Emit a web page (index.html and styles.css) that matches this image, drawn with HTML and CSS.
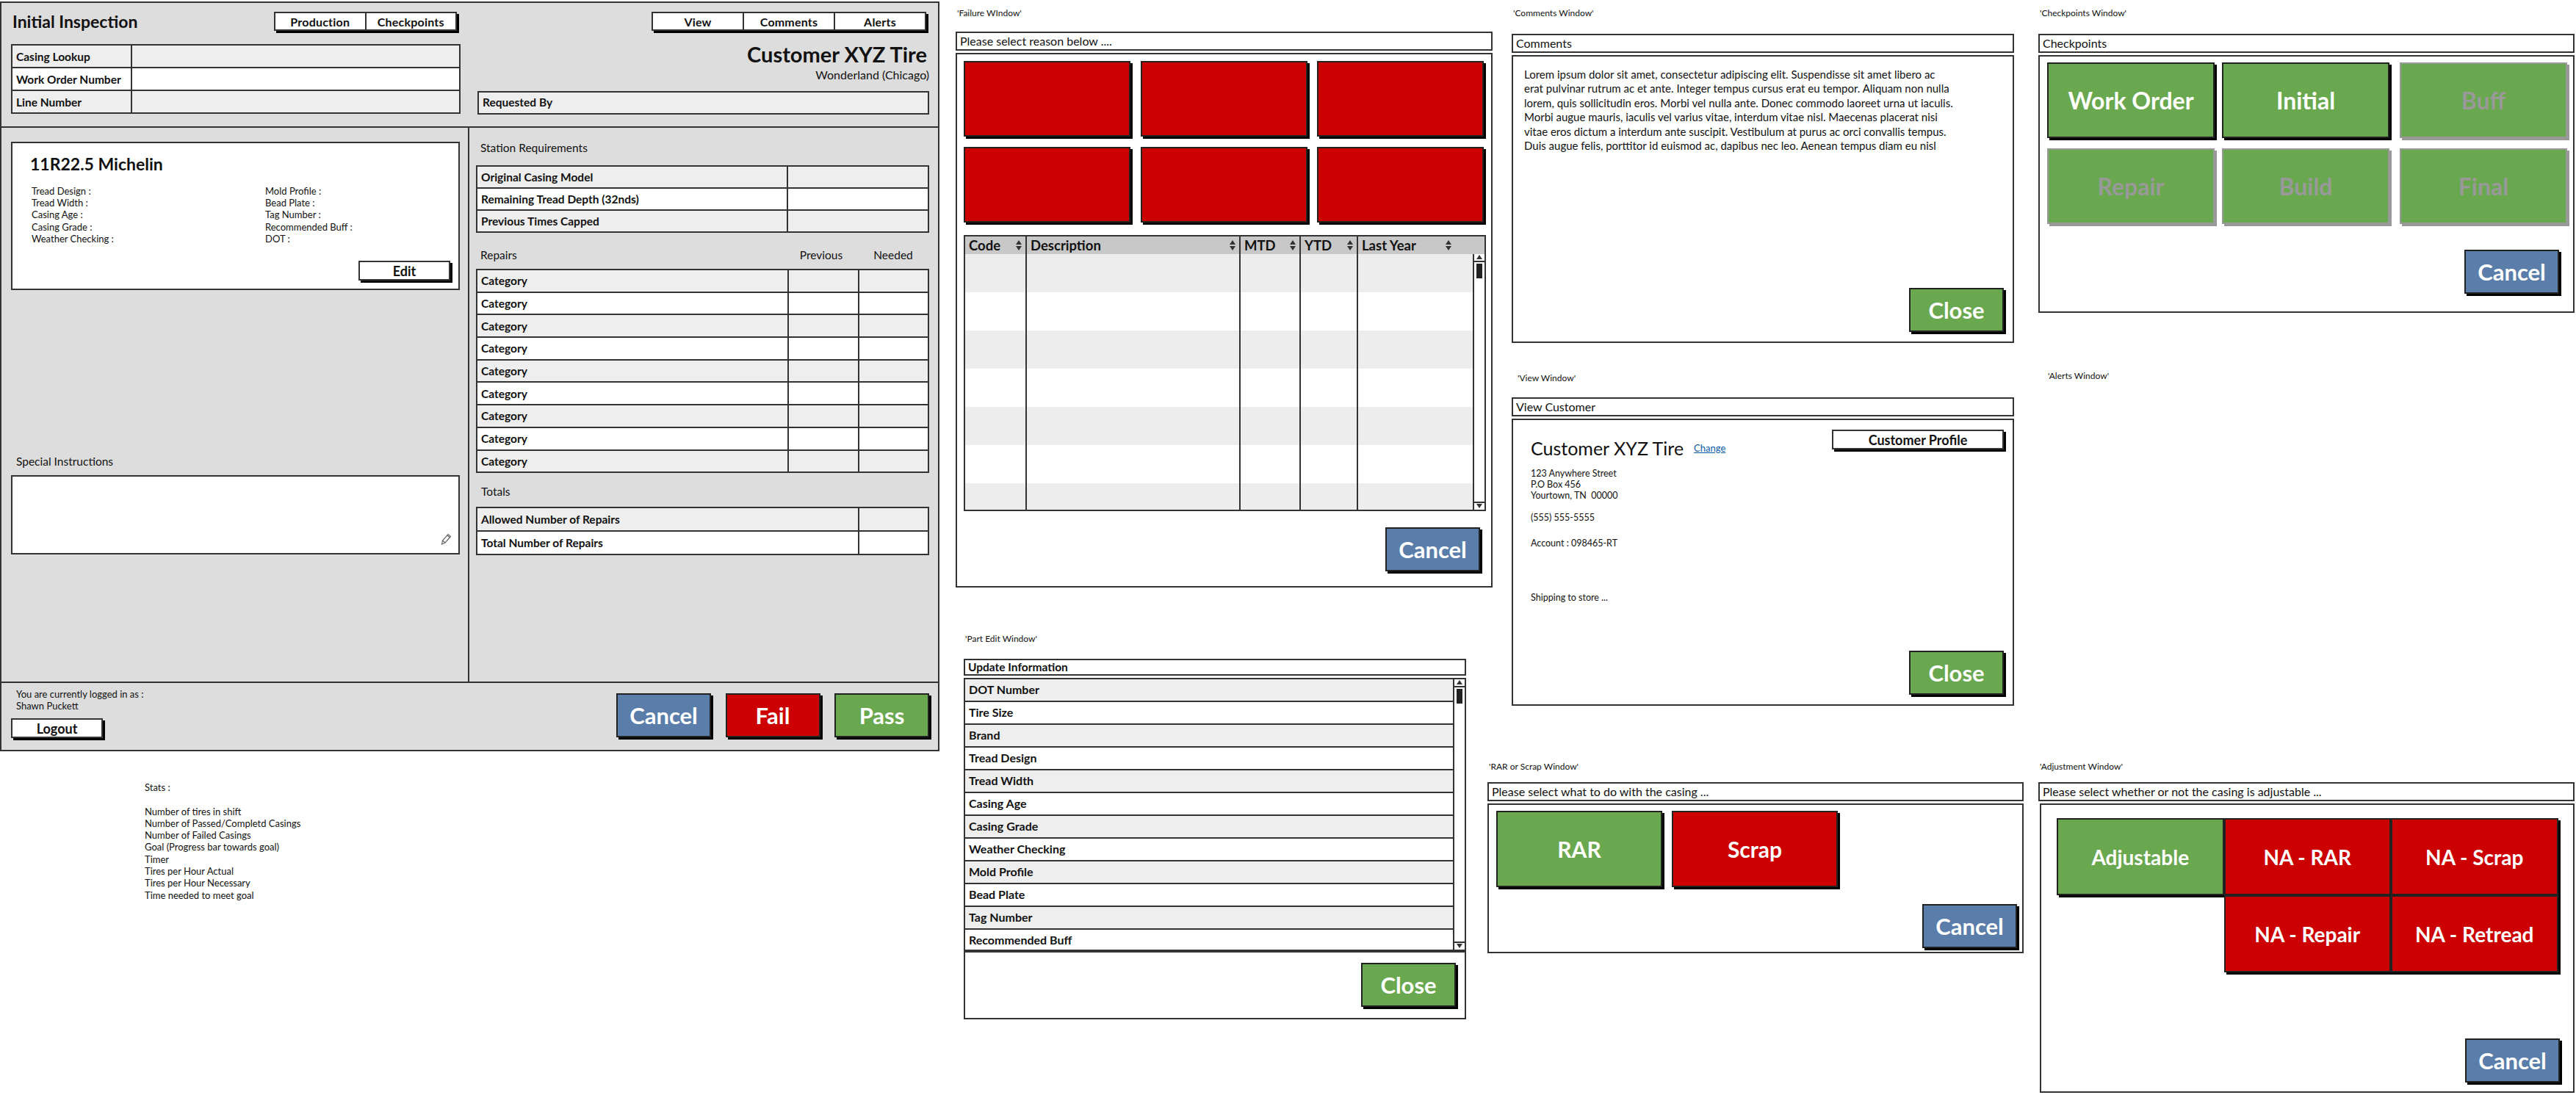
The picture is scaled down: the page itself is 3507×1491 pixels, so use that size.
FILE: index.html
```html
<!DOCTYPE html>
<html lang="en">
<head>
  <meta charset="UTF-8">
  <meta name="viewport" content="width=device-width, initial-scale=1.0">
  <title>Initial Inspection Wireframes</title>
  <link rel="stylesheet" href="styles.css">
</head>
<body>
  <div class="canvas">

    <!-- Main screen -->
    <section class="screen">
      <header class="screen-head">
        <div class="head-col">
          <div class="head-row">
            <h1 class="screen-title">Initial Inspection</h1>
            <div class="btn-group group-left">
              <button class="group-btn">Production</button>
              <button class="group-btn">Checkpoints</button>
            </div>
          </div>
          <table class="sheet sheet-lookup">
            <tr><td class="cell-label">Casing Lookup</td><td></td></tr>
            <tr><td class="cell-label">Work Order Number</td><td></td></tr>
            <tr><td class="cell-label">Line Number</td><td></td></tr>
          </table>
        </div>
        <div class="head-col">
          <div class="btn-group group-right">
            <button class="group-btn">View</button>
            <button class="group-btn">Comments</button>
            <button class="group-btn">Alerts</button>
          </div>
          <h2 class="customer-name">Customer XYZ Tire</h2>
          <p class="customer-place">Wonderland (Chicago)</p>
          <div class="requested">Requested By</div>
        </div>
      </header>

      <div class="screen-main">
        <div class="main-left">
          <div class="tire-card">
            <h2 class="tire-name">11R22.5 Michelin</h2>
            <div class="tire-specs">
              <ul class="spec-list">
                <li>Tread Design :</li>
                <li>Tread Width :</li>
                <li>Casing Age :</li>
                <li>Casing Grade :</li>
                <li>Weather Checking :</li>
              </ul>
              <ul class="spec-list">
                <li>Mold Profile :</li>
                <li>Bead Plate :</li>
                <li>Tag Number :</li>
                <li>Recommended Buff :</li>
                <li>DOT :</li>
              </ul>
            </div>
            <button class="plain-btn edit-btn">Edit</button>
          </div>
          <div class="instructions">
            <h3 class="section-label">Special Instructions</h3>
            <div class="text-box">
              <svg class="pencil" width="15" height="16" viewBox="0 0 15 16">
                <path d="M1.5 15 L2.5 10 L10 1.5 L13.5 4.5 L6 13 Z M9 3 L12.5 6 M2.5 10 L6 13" fill="#fff" stroke="#666" stroke-width="1.2"/>
              </svg>
            </div>
          </div>
        </div>

        <div class="main-right">
          <h3 class="section-label">Station Requirements</h3>
          <table class="sheet sheet-station">
            <tr><td class="cell-wide">Original Casing Model</td><td></td></tr>
            <tr><td class="cell-wide">Remaining Tread Depth (32nds)</td><td></td></tr>
            <tr><td class="cell-wide">Previous Times Capped</td><td></td></tr>
          </table>
          <div class="repairs-head">
            <h3 class="section-label">Repairs</h3>
            <span class="col-head">Previous</span>
            <span class="col-head">Needed</span>
          </div>
          <table class="sheet sheet-repairs">
            <tr><td class="cell-wide">Category</td><td class="cell-num"></td><td class="cell-num"></td></tr>
            <tr><td class="cell-wide">Category</td><td class="cell-num"></td><td class="cell-num"></td></tr>
            <tr><td class="cell-wide">Category</td><td class="cell-num"></td><td class="cell-num"></td></tr>
            <tr><td class="cell-wide">Category</td><td class="cell-num"></td><td class="cell-num"></td></tr>
            <tr><td class="cell-wide">Category</td><td class="cell-num"></td><td class="cell-num"></td></tr>
            <tr><td class="cell-wide">Category</td><td class="cell-num"></td><td class="cell-num"></td></tr>
            <tr><td class="cell-wide">Category</td><td class="cell-num"></td><td class="cell-num"></td></tr>
            <tr><td class="cell-wide">Category</td><td class="cell-num"></td><td class="cell-num"></td></tr>
            <tr><td class="cell-wide">Category</td><td class="cell-num"></td><td class="cell-num"></td></tr>
          </table>
          <h3 class="section-label totals-label">Totals</h3>
          <table class="sheet sheet-totals">
            <tr><td>Allowed Number of Repairs</td><td class="cell-num"></td></tr>
            <tr><td>Total Number of Repairs</td><td class="cell-num"></td></tr>
          </table>
        </div>
      </div>

      <footer class="screen-foot">
        <div class="login">
          <p class="login-text">You are currently logged in as :<br>Shawn Puckett</p>
          <button class="plain-btn logout-btn">Logout</button>
        </div>
        <div class="foot-actions">
          <button class="btn btn-blue">Cancel</button>
          <button class="btn btn-red">Fail</button>
          <button class="btn btn-green">Pass</button>
        </div>
      </footer>
    </section>

    <p class="stats">
      Stats :<br><br>
      Number of tires in shift<br>
      Number of Passed/Completd Casings<br>
      Number of Failed Casings<br>
      Goal (Progress bar towards goal)<br>
      Timer<br>
      Tires per Hour Actual<br>
      Tires per Hour Necessary<br>
      Time needed to meet goal
    </p>

    <!-- Failure window -->
    <p class="note note-failure">'Failure WIndow'</p>
    <section class="win win-failure">
      <div class="win-title">Please select reason below ....</div>
      <div class="win-body failure-body">
        <div class="tile-grid failure-tiles">
          <button class="tile btn-red"></button>
          <button class="tile btn-red"></button>
          <button class="tile btn-red"></button>
          <button class="tile btn-red"></button>
          <button class="tile btn-red"></button>
          <button class="tile btn-red"></button>
        </div>
        <div class="data-grid">
          <table class="grid-table">
            <thead>
              <tr>
                <th class="col-code"><span class="th-inner">Code <svg class="sort" width="8" height="14" viewBox="0 0 8 14"><path d="M4 0 L8 6 L0 6 Z M0 8 L8 8 L4 14 Z"/></svg></span></th>
                <th class="col-desc"><span class="th-inner">Description <svg class="sort" width="8" height="14" viewBox="0 0 8 14"><path d="M4 0 L8 6 L0 6 Z M0 8 L8 8 L4 14 Z"/></svg></span></th>
                <th class="col-mtd"><span class="th-inner">MTD <svg class="sort" width="8" height="14" viewBox="0 0 8 14"><path d="M4 0 L8 6 L0 6 Z M0 8 L8 8 L4 14 Z"/></svg></span></th>
                <th class="col-ytd"><span class="th-inner">YTD <svg class="sort" width="8" height="14" viewBox="0 0 8 14"><path d="M4 0 L8 6 L0 6 Z M0 8 L8 8 L4 14 Z"/></svg></span></th>
                <th class="col-year"><span class="th-inner">Last Year <svg class="sort" width="8" height="14" viewBox="0 0 8 14"><path d="M4 0 L8 6 L0 6 Z M0 8 L8 8 L4 14 Z"/></svg></span></th>
              </tr>
            </thead>
            <tbody>
              <tr><td></td><td></td><td></td><td></td><td></td></tr>
              <tr><td></td><td></td><td></td><td></td><td></td></tr>
              <tr><td></td><td></td><td></td><td></td><td></td></tr>
              <tr><td></td><td></td><td></td><td></td><td></td></tr>
              <tr><td></td><td></td><td></td><td></td><td></td></tr>
              <tr><td></td><td></td><td></td><td></td><td></td></tr>
              <tr><td></td><td></td><td></td><td></td><td></td></tr>
            </tbody>
          </table>
          <div class="scrollbar scrollbar-grid">
            <span class="scroll-arrow"><svg width="10" height="8" viewBox="0 0 10 8"><path d="M5 1 L9 7 L1 7 Z"/></svg></span>
            <span class="scroll-thumb"></span>
            <span class="scroll-arrow scroll-arrow-end"><svg width="10" height="8" viewBox="0 0 10 8"><path d="M1 1 L9 1 L5 7 Z"/></svg></span>
          </div>
        </div>
        <div class="win-actions failure-actions">
          <button class="btn btn-blue">Cancel</button>
        </div>
      </div>
    </section>

    <!-- Comments window -->
    <p class="note note-comments">'Comments Window'</p>
    <section class="win win-comments">
      <div class="win-title">Comments</div>
      <div class="win-body comments-body">
        <p class="comments-text">Lorem ipsum dolor sit amet, consectetur adipiscing elit. Suspendisse sit amet libero ac<br>erat pulvinar rutrum ac et ante. Integer tempus cursus erat eu tempor. Aliquam non nulla<br>lorem, quis sollicitudin eros. Morbi vel nulla ante. Donec commodo laoreet urna ut iaculis.<br>Morbi augue mauris, iaculis vel varius vitae, interdum vitae nisl. Maecenas placerat nisi<br>vitae eros dictum a interdum ante suscipit. Vestibulum at purus ac orci convallis tempus.<br>Duis augue felis, porttitor id euismod ac, dapibus nec leo. Aenean tempus diam eu nisl</p>
        <div class="win-actions">
          <button class="btn btn-green">Close</button>
        </div>
      </div>
    </section>

    <!-- Checkpoints window -->
    <p class="note note-checkpoints">'Checkpoints Window'</p>
    <section class="win win-checkpoints">
      <div class="win-title">Checkpoints</div>
      <div class="win-body checkpoints-body">
        <div class="tile-grid checkpoint-tiles">
          <button class="tile btn-green">Work Order</button>
          <button class="tile btn-green">Initial</button>
          <button class="tile btn-green is-off">Buff</button>
          <button class="tile btn-green is-off">Repair</button>
          <button class="tile btn-green is-off">Build</button>
          <button class="tile btn-green is-off">Final</button>
        </div>
        <div class="win-actions checkpoint-actions">
          <button class="btn btn-blue">Cancel</button>
        </div>
      </div>
    </section>

    <!-- View window -->
    <p class="note note-view">'View Window'</p>
    <section class="win win-view">
      <div class="win-title">View Customer</div>
      <div class="win-body view-body">
        <div class="view-top">
          <div class="view-name">
            <h2 class="view-customer">Customer XYZ Tire</h2>
            <a class="view-link" href="#">Change</a>
          </div>
          <button class="plain-btn profile-btn">Customer Profile</button>
        </div>
        <p class="view-text">123 Anywhere Street<br>P.O Box 456<br>Yourtown, TN&nbsp; 00000</p>
        <p class="view-text view-phone">(555) 555-5555</p>
        <p class="view-text view-account">Account : 098465-RT</p>
        <p class="view-text view-ship">Shipping to store ...</p>
        <div class="win-actions">
          <button class="btn btn-green">Close</button>
        </div>
      </div>
    </section>

    <p class="note note-alerts">'Alerts Window'</p>

    <!-- Part edit window -->
    <p class="note note-part">'Part Edit Window'</p>
    <section class="win win-part">
      <div class="win-title part-title">Update Information</div>
      <div class="part-list">
        <div class="part-row">DOT Number</div>
        <div class="part-row">Tire Size</div>
        <div class="part-row">Brand</div>
        <div class="part-row">Tread Design</div>
        <div class="part-row">Tread Width</div>
        <div class="part-row">Casing Age</div>
        <div class="part-row">Casing Grade</div>
        <div class="part-row">Weather Checking</div>
        <div class="part-row">Mold Profile</div>
        <div class="part-row">Bead Plate</div>
        <div class="part-row">Tag Number</div>
        <div class="part-row">Recommended Buff</div>
        <div class="scrollbar scrollbar-part">
          <span class="scroll-arrow"><svg width="10" height="8" viewBox="0 0 10 8"><path d="M5 1 L9 7 L1 7 Z"/></svg></span>
          <span class="scroll-thumb"></span>
          <span class="scroll-arrow scroll-arrow-end"><svg width="10" height="8" viewBox="0 0 10 8"><path d="M1 1 L9 1 L5 7 Z"/></svg></span>
        </div>
      </div>
      <div class="win-body part-foot">
        <div class="win-actions">
          <button class="btn btn-green">Close</button>
        </div>
      </div>
    </section>

    <!-- RAR or scrap window -->
    <p class="note note-rar">'RAR or Scrap Window'</p>
    <section class="win win-rar">
      <div class="win-title">Please select what to do with the casing ...</div>
      <div class="win-body rar-body">
        <div class="rar-tiles">
          <button class="tile btn-green">RAR</button>
          <button class="tile btn-red">Scrap</button>
        </div>
        <div class="win-actions">
          <button class="btn btn-blue">Cancel</button>
        </div>
      </div>
    </section>

    <!-- Adjustment window -->
    <p class="note note-adjust">'Adjustment Window'</p>
    <section class="win win-adjust">
      <div class="win-title">Please select whether or not the casing is adjustable ...</div>
      <div class="win-body adjust-body">
        <div class="adjust-tiles">
          <button class="tile btn-green">Adjustable</button>
          <button class="tile btn-red">NA - RAR</button>
          <button class="tile btn-red">NA - Scrap</button>
          <button class="tile btn-red adjust-second">NA - Repair</button>
          <button class="tile btn-red">NA - Retread</button>
        </div>
        <div class="win-actions">
          <button class="btn btn-blue">Cancel</button>
        </div>
      </div>
    </section>

  </div>
</body>
</html>
```

FILE: styles.css
```css
/* Global Styles */
* {
  margin: 0;
  padding: 0;
  box-sizing: border-box;
}

body {
  font-family: Lato, "Open Sans", sans-serif;
  color: #111;
  background-color: #fff;
}

button {
  font-family: inherit;
  cursor: pointer;
}

ul {
  list-style: none;
}

/* Free canvas the mockups sit on */
.canvas {
  position: relative;
  width: 3507px;
  height: 1491px;
  overflow: hidden;
}

/* Main Screen */
.screen {
  position: absolute;
  left: 0;
  top: 2px;
  width: 1279px;
  height: 1021px;
  display: flex;
  flex-direction: column;
  border: 2px solid #333;
  background-color: #ddd;
}

.screen-head {
  height: 170px;
  flex: none;
  display: grid;
  grid-template-columns: 612px 615px;
  column-gap: 23px;
  padding: 12px 0 0 13px;
  border-bottom: 2px solid #333;
}

.head-row {
  display: flex;
  justify-content: space-between;
  align-items: center;
  margin-bottom: 18px;
  padding-right: 5px;
}

.screen-title {
  font-size: 23px;
  font-weight: 700;
  line-height: 26px;
  padding-left: 2px;
}

/* Button Groups */
.btn-group {
  display: flex;
  height: 26px;
  border: 2px solid #333;
  background-color: #fff;
  box-shadow: 3px 3px 0 #000;
}

.group-left {
  width: 249px;
}

.group-right {
  width: 374px;
  margin-left: 237px;
}

.group-btn {
  flex: 1;
  border: none;
  border-left: 2px solid #333;
  background: none;
  font-size: 16px;
  font-weight: 700;
  letter-spacing: 0.2px;
  color: #111;
}

.group-btn:first-child {
  border-left: none;
}

/* Customer Header */
.customer-name {
  margin-top: 15px;
  padding-right: 3px;
  font-size: 29px;
  font-weight: 700;
  line-height: 34px;
  text-align: right;
}

.customer-place {
  padding-top: 1px;
  font-size: 16px;
  line-height: 19px;
  text-align: right;
}

.requested {
  height: 32px;
  margin-top: 13px;
  padding-left: 5px;
  border: 2px solid #333;
  font-size: 15.5px;
  font-weight: 700;
  line-height: 26px;
  background-color: #eee;
}

/* Sheets (label tables) */
.sheet {
  width: 100%;
  border: 2px solid #333;
  border-collapse: collapse;
  table-layout: fixed;
  font-size: 15.5px;
  font-weight: 700;
}

.sheet td {
  padding-left: 5px;
  border: 2px solid #333;
}

.sheet tr:nth-child(odd) td {
  background-color: #eee;
}

.sheet tr:nth-child(even) td {
  background-color: #fff;
}

.sheet-lookup tr {
  height: 31px;
}

.sheet-lookup .cell-label {
  width: 163px;
}

.sheet-station tr {
  height: 30px;
}

.cell-wide {
  width: 423px;
}

.cell-num {
  width: 95px;
}

.sheet-repairs tr {
  height: 30.7px;
}

.sheet-totals tr {
  height: 32px;
}

/* Main Body */
.screen-main {
  flex: 1;
  display: flex;
  min-height: 0;
}

.main-left {
  width: 637px;
  flex: none;
  padding: 19px 11px 0 13px;
  display: flex;
  flex-direction: column;
  border-right: 2px solid #333;
}

.main-right {
  flex: 1;
  padding: 17px 12px 0 9px;
}

.section-label {
  font-size: 15.5px;
  font-weight: 400;
  line-height: 20px;
}

/* Tire Card */
.tire-card {
  height: 202px;
  padding: 14px 11px 0 24px;
  display: flex;
  flex-direction: column;
  border: 2px solid #333;
  background-color: #fff;
}

.tire-name {
  font-size: 23px;
  font-weight: 700;
  line-height: 28px;
}

.tire-specs {
  display: grid;
  grid-template-columns: 318px 1fr;
  margin-top: 15px;
  padding-left: 2px;
}

.spec-list li {
  font-size: 13px;
  line-height: 16.2px;
}

.plain-btn {
  border: 2px solid #333;
  background-color: #fff;
  box-shadow: 3px 3px 0 #000;
  font-size: 18px;
  font-weight: 700;
  color: #111;
}

.edit-btn {
  width: 125px;
  height: 27px;
  margin-top: auto;
  margin-bottom: 11px;
  align-self: flex-end;
}

.instructions {
  margin-top: auto;
  margin-bottom: 173px;
}

.instructions .section-label {
  margin-bottom: 9px;
  padding-left: 7px;
}

.text-box {
  position: relative;
  height: 108px;
  border: 2px solid #333;
  background-color: #fff;
}

.pencil {
  position: absolute;
  right: 9px;
  bottom: 11px;
}

/* Repairs / Station */
.sheet-station {
  margin-top: 14px;
}

.main-right > .section-label:first-child {
  padding-left: 6px;
}

.repairs-head {
  display: flex;
  align-items: center;
  margin: 20px 0 9px;
  padding-left: 6px;
}

.repairs-head .section-label {
  flex: 1;
}

.col-head {
  width: 98px;
  font-size: 15.5px;
  text-align: center;
}

.totals-label {
  margin: 15px 0 11px;
  padding-left: 7px;
}

/* Screen Footer */
.screen-foot {
  height: 93px;
  flex: none;
  display: flex;
  justify-content: space-between;
  padding: 7px 12px 0 13px;
  border-top: 2px solid #333;
}

.login-text {
  padding-left: 7px;
  font-size: 13px;
  line-height: 16px;
}

.logout-btn {
  width: 125px;
  height: 27px;
  margin-top: 9px;
}

.foot-actions {
  display: flex;
  gap: 19.5px;
  padding-top: 7px;
}

/* Colour Buttons */
.btn {
  width: 129px;
  height: 60px;
  border: 2px solid #222;
  box-shadow: 3px 3px 0 #000;
  font-size: 31px;
  font-weight: 700;
  color: #fff;
}

.btn-blue {
  background-color: #5a7daa;
}

.btn-red {
  background-color: #cc0000;
}

.btn-green {
  background-color: #69a84f;
}

.tile {
  border: 2px solid #222;
  box-shadow: 3px 3px 0 #000;
  font-size: 30px;
  font-weight: 700;
  color: #fff;
}

.tile.is-off {
  border-color: #999;
  box-shadow: 3px 3px 0 #999;
  color: #999;
}

/* Windows */
.win {
  position: absolute;
  display: flex;
  flex-direction: column;
  gap: 3px;
}

.win-title {
  height: 26px;
  flex: none;
  padding-left: 4px;
  border: 2px solid #333;
  font-size: 16px;
  line-height: 21px;
  background-color: #fff;
}

.win-body {
  flex: 1;
  display: flex;
  flex-direction: column;
  min-height: 0;
  border: 2px solid #333;
  background-color: #fff;
}

.win-actions {
  display: flex;
  justify-content: flex-end;
  margin-top: auto;
}

.note {
  position: absolute;
  font-size: 12px;
  line-height: 16px;
}

.note-failure {
  left: 1303px;
  top: 10px;
}

.note-comments {
  left: 2060px;
  top: 10px;
}

.note-checkpoints {
  left: 2777px;
  top: 10px;
}

.note-view {
  left: 2066px;
  top: 507px;
}

.note-alerts {
  left: 2788px;
  top: 504px;
}

.note-part {
  left: 1314px;
  top: 862px;
}

.note-rar {
  left: 2027px;
  top: 1036px;
}

.note-adjust {
  left: 2777px;
  top: 1036px;
}

.stats {
  position: absolute;
  left: 197px;
  top: 1064px;
  font-size: 13px;
  line-height: 16.3px;
}

/* Failure Window */
.win-failure {
  left: 1301px;
  top: 43px;
  width: 731px;
  height: 757px;
}

.failure-body {
  padding: 9px 7px 20px 9px;
}

.failure-actions {
  margin-right: 8px;
}

.tile-grid {
  display: grid;
  grid-template-columns: repeat(3, 227px);
  grid-auto-rows: 103px;
  column-gap: 13.5px;
  row-gap: 14px;
}

.data-grid {
  position: relative;
  width: 711px;
  height: 376px;
  margin-top: 17px;
  overflow: hidden;
  border: 2px solid #333;
  background-color: #fff;
}

.grid-table {
  width: 100%;
  border-collapse: collapse;
  table-layout: fixed;
}

.grid-table th {
  height: 24px;
  padding: 0 5px;
  border-left: 2px solid #333;
  font-size: 18.5px;
  font-weight: 700;
  line-height: 22px;
  text-align: left;
  background-color: #c8c8c8;
}

.grid-table th:first-child {
  border-left: none;
}

.th-inner {
  display: flex;
  justify-content: space-between;
  align-items: center;
}

.sort {
  fill: #333;
}

.col-code {
  width: 83px;
}

.col-desc {
  width: 291px;
}

.col-mtd {
  width: 82px;
}

.col-ytd {
  width: 78px;
}

.grid-table th.col-year {
  padding-right: 45px;
}

.grid-table td {
  height: 52px;
  border-left: 2px solid #333;
}

.grid-table td:first-child {
  border-left: none;
}

.grid-table tbody tr:nth-child(odd) td {
  background-color: #ededed;
}

/* Scrollbars */
.scrollbar {
  position: absolute;
  right: 0;
  display: flex;
  flex-direction: column;
  width: 16px;
  border-left: 2px solid #333;
  background-color: #fff;
}

.scrollbar-grid {
  top: 24px;
  bottom: 0;
}

.scrollbar-part {
  top: 0;
  bottom: 0;
}

.scroll-arrow {
  display: flex;
  justify-content: center;
  height: 11px;
  border-bottom: 2px solid #333;
  fill: #333;
}

.scroll-arrow-end {
  margin-top: auto;
  border-top: 2px solid #333;
  border-bottom: none;
}

.scroll-thumb {
  width: 8px;
  height: 20px;
  margin: 2px auto 0;
  background-color: #222;
}

/* Comments Window */
.win-comments {
  left: 2058px;
  top: 46px;
  width: 684px;
  height: 421px;
}

.comments-body {
  padding: 15px 12px 13px 15px;
}

.comments-text {
  font-size: 15px;
  line-height: 19.4px;
}

/* Checkpoints Window */
.win-checkpoints {
  left: 2775px;
  top: 46px;
  width: 730px;
  height: 380px;
}

.checkpoints-body {
  padding: 8px 15px 24px 10px;
}

.checkpoint-tiles {
  grid-template-columns: 238px 242px 231px;
  grid-auto-rows: 103px;
  column-gap: 0;
  row-gap: 14px;
}

.checkpoint-tiles .tile {
  width: 228px;
  font-size: 32px;
}

.checkpoint-actions {
  margin-right: 4px;
}

/* View Window */
.win-view {
  left: 2058px;
  top: 541px;
  width: 684px;
  height: 420px;
}

.view-body {
  padding: 13px 12px 13px 24px;
}

.view-top {
  display: flex;
  justify-content: space-between;
  align-items: flex-start;
}

.view-name {
  display: flex;
  align-items: center;
  gap: 14px;
  margin-top: 10px;
}

.view-customer {
  font-size: 25px;
  font-weight: 400;
  line-height: 30px;
}

.view-link {
  font-size: 13px;
  color: #0b5cab;
}

.profile-btn {
  width: 234px;
  height: 27px;
}

.view-text {
  font-size: 12.5px;
  line-height: 15px;
}

.view-top + .view-text {
  margin-top: 12px;
}

.view-phone {
  margin-top: 15px;
}

.view-account {
  margin-top: 20px;
}

.view-ship {
  margin-top: 59px;
}

/* Part Edit Window */
.win-part {
  left: 1312px;
  top: 897px;
  width: 684px;
  height: 491px;
  gap: 3px;
}

.part-title {
  height: 23px;
  font-size: 15.5px;
  font-weight: 700;
  line-height: 19px;
}

.part-list {
  position: relative;
  height: 372px;
  flex: none;
  overflow: hidden;
  border: 2px solid #333;
  background-color: #fff;
}

.part-row {
  height: 31px;
  padding-left: 5px;
  border-bottom: 2px solid #333;
  font-size: 16px;
  font-weight: 700;
  line-height: 28px;
}

.part-row:nth-child(odd) {
  background-color: #eee;
}

.part-foot {
  margin-top: -3px;
  padding: 14px 12px 15px 0;
}

/* RAR Window */
.win-rar {
  left: 2025px;
  top: 1065px;
  width: 730px;
  height: 233px;
}

.rar-body {
  padding: 8px 7px 5px 10px;
}

.rar-tiles {
  display: grid;
  grid-template-columns: repeat(2, 226px);
  grid-auto-rows: 104px;
  column-gap: 13px;
}

/* Adjustment Window */
.win-adjust {
  left: 2775px;
  top: 1065px;
  width: 730px;
  height: 423px;
}

.adjust-body {
  margin-left: 2px;
  padding: 18px 18px 12px 21px;
}

.adjust-tiles {
  display: grid;
  grid-template-columns: 227.5px 227.5px 227.5px;
  grid-auto-rows: 105px;
}

.adjust-second {
  grid-column: 2;
}

.adjust-tiles .tile {
  font-size: 28px;
  font-weight: 700;
}
```
